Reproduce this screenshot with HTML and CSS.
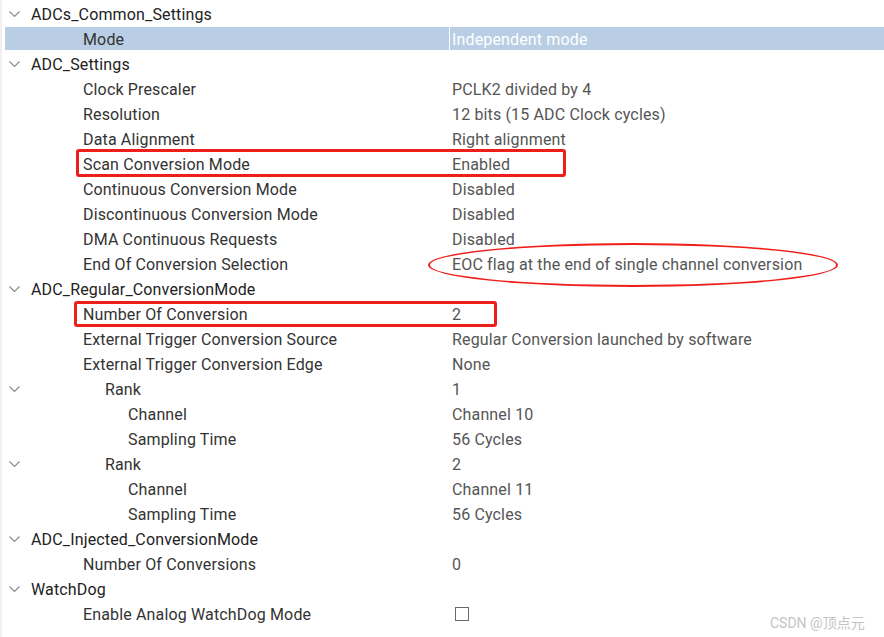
FILE: index.html
```html
<!DOCTYPE html>
<html>
<head>
<meta charset="utf-8">
<link rel="stylesheet" href="styles.css">
</head>
<body>
<div class="tree">
  <div class="row l0"><span class="name"><svg class="chev" viewBox="0 0 11 6"><polyline points="0.5,0.5 5.5,5.5 10.5,0.5"/></svg>ADCs_Common_Settings</span><span class="val"></span></div>
  <div class="row l1 sel"><span class="name">Mode</span><span class="val">Independent mode</span></div>
  <div class="row l0"><span class="name"><svg class="chev" viewBox="0 0 11 6"><polyline points="0.5,0.5 5.5,5.5 10.5,0.5"/></svg>ADC_Settings</span><span class="val"></span></div>
  <div class="row l1"><span class="name">Clock Prescaler</span><span class="val">PCLK2 divided by 4</span></div>
  <div class="row l1"><span class="name">Resolution</span><span class="val">12 bits (15 ADC Clock cycles)</span></div>
  <div class="row l1"><span class="name">Data Alignment</span><span class="val">Right alignment</span></div>
  <div class="row l1"><span class="name">Scan Conversion Mode</span><span class="val">Enabled</span></div>
  <div class="row l1"><span class="name">Continuous Conversion Mode</span><span class="val">Disabled</span></div>
  <div class="row l1"><span class="name">Discontinuous Conversion Mode</span><span class="val">Disabled</span></div>
  <div class="row l1"><span class="name">DMA Continuous Requests</span><span class="val">Disabled</span></div>
  <div class="row l1"><span class="name">End Of Conversion Selection</span><span class="val">EOC flag at the end of single channel conversion</span></div>
  <div class="row l0"><span class="name"><svg class="chev" viewBox="0 0 11 6"><polyline points="0.5,0.5 5.5,5.5 10.5,0.5"/></svg>ADC_Regular_ConversionMode</span><span class="val"></span></div>
  <div class="row l1"><span class="name">Number Of Conversion</span><span class="val">2</span></div>
  <div class="row l1"><span class="name">External Trigger Conversion Source</span><span class="val">Regular Conversion launched by software</span></div>
  <div class="row l1"><span class="name">External Trigger Conversion Edge</span><span class="val">None</span></div>
  <div class="row l2"><span class="name"><svg class="chev" viewBox="0 0 11 6"><polyline points="0.5,0.5 5.5,5.5 10.5,0.5"/></svg>Rank</span><span class="val">1</span></div>
  <div class="row l3"><span class="name">Channel</span><span class="val">Channel 10</span></div>
  <div class="row l3"><span class="name">Sampling Time</span><span class="val">56 Cycles</span></div>
  <div class="row l2"><span class="name"><svg class="chev" viewBox="0 0 11 6"><polyline points="0.5,0.5 5.5,5.5 10.5,0.5"/></svg>Rank</span><span class="val">2</span></div>
  <div class="row l3"><span class="name">Channel</span><span class="val">Channel 11</span></div>
  <div class="row l3"><span class="name">Sampling Time</span><span class="val">56 Cycles</span></div>
  <div class="row l0"><span class="name"><svg class="chev" viewBox="0 0 11 6"><polyline points="0.5,0.5 5.5,5.5 10.5,0.5"/></svg>ADC_Injected_ConversionMode</span><span class="val"></span></div>
  <div class="row l1"><span class="name">Number Of Conversions</span><span class="val">0</span></div>
  <div class="row l0"><span class="name"><svg class="chev" viewBox="0 0 11 6"><polyline points="0.5,0.5 5.5,5.5 10.5,0.5"/></svg>WatchDog</span><span class="val"></span></div>
  <div class="row l1"><span class="name">Enable Analog WatchDog Mode</span><span class="val"><span class="check"></span></span></div>

  <div class="mark box1"></div>
  <div class="mark box2"></div>
  <div class="mark oval"></div>
  <div class="watermark">CSDN @顶点元</div>
</div>
</body>
</html>
```
FILE: styles.css
```css
html, body {
  margin: 0;
  padding: 0;
  background: #ffffff;
}
body {
  width: 884px;
  height: 637px;
  overflow: hidden;
  font-family: Roboto, "Noto Sans CJK SC", sans-serif;
  font-size: 16px;
  letter-spacing: 0.15px;
  color: #3a3a3a;
}
.tree {
  position: relative;
  height: 637px;
  padding-top: 2px;
  box-sizing: border-box;
  border-left: 2px solid #f0f0f0;
}
.row {
  display: grid;
  grid-template-columns: 444px 1fr;
  height: 25px;
  margin-left: 3px;
  box-sizing: border-box;
  line-height: 26px;
}
.name {
  position: relative;
  white-space: nowrap;
  color: #333333;
}
.val {
  padding-left: 2px;
  white-space: nowrap;
  color: #555555;
  border-left: 1px solid transparent;
}
.l0 .name { padding-left: 26px; color: #222222; }
.l1 .name { padding-left: 78px; }
.l2 .name { padding-left: 100px; }
.l3 .name { padding-left: 123px; }
.chev {
  position: absolute;
  left: 4px;
  top: 9px;
  width: 11px;
  height: 6px;
  fill: none;
  stroke: #8a8a8a;
  stroke-width: 1.1;
}
.sel {
  background: #b9cee4;
  border-bottom: 2px solid #ffffff;
}
.sel .val {
  color: #ffffff;
  border-left-color: #ffffff;
}
.check {
  display: inline-block;
  width: 12px;
  height: 12px;
  border: 1.5px solid #6a6a6a;
  margin-left: 3px;
  margin-top: 5px;
  vertical-align: top;
}
.mark {
  position: absolute;
  box-sizing: border-box;
  border: 3px solid #f01e1a;
}
.box1 {
  left: 74px;
  top: 149px;
  width: 490px;
  height: 28px;
  border-radius: 3px;
}
.box2 {
  left: 72px;
  top: 301px;
  width: 423px;
  height: 26px;
  border-radius: 3px;
}
.oval {
  left: 426px;
  top: 243px;
  width: 410px;
  height: 44px;
  border-width: 2px;
  border-radius: 50%;
}
.watermark {
  position: absolute;
  left: 768px;
  top: 612px;
  font-size: 14px;
  letter-spacing: 0;
  color: #c4c4c4;
  white-space: nowrap;
}
```
